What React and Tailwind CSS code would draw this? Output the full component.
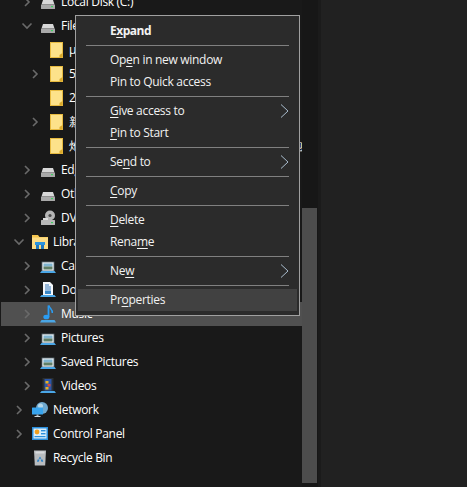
import React from "react";

const Chevron = ({ open }) => (
  <svg width="12" height="12" viewBox="0 0 12 12" className="shrink-0" fill="none" stroke="#6a6a6a" strokeWidth="1.6">
    {open ? <path d="M1.500 3.500l4.500 4.500 4.500-4.500" /> : <path d="M4 2l4 4-4 4" />}
  </svg>
);

const Drive = ({ badge }) => (
  <svg width="16" height="16" viewBox="0 0 16 16">
    <path d="M3 6h10l1.500 4.500h-13z" fill="#d8d8d8" />
    <rect x="1" y="10.500" width="14" height="4.500" rx="0.500" fill="#a9a9a9" />
    <rect x="11" y="12" width="2" height="1.200" fill="#3fd060" />
    {badge && <rect x="0" y="0" width="7" height="6" fill="#2aa4ec" />}
  </svg>
);

const Dvd = () => (
  <svg width="16" height="16" viewBox="0 0 16 16">
    <circle cx="10" cy="5.500" r="5" fill="#b5b5b5" />
    <circle cx="10" cy="5.500" r="1.600" fill="#4a4a4a" />
    <rect x="1" y="10" width="14" height="5" rx="0.500" fill="#b8b8b8" />
    <rect x="3" y="8" width="5" height="2" fill="#dcdcdc" />
    <rect x="11" y="12" width="2" height="1.200" fill="#3fd060" />
  </svg>
);

const Folder = () => (
  <svg width="13" height="16" viewBox="0 0 13 16">
    <rect x="0.500" y="0.500" width="12" height="15" fill="#fde28a" stroke="#e8bb40" />
    <path d="M12.500 11v4.500h-3v-2.500z" fill="#d9a92c" />
  </svg>
);

const LibFolder = () => (
  <svg width="16" height="16" viewBox="0 0 16 16">
    <path d="M0 1h6l1.500 2H16v12H0z" fill="#f4c54e" />
    <rect x="0" y="3.500" width="16" height="11.500" fill="#fbdc86" />
    <path d="M3 8h10v3H3z" fill="#2a93dd" />
    <path d="M4 11h3v4H4zM9 11h3v4H9z" fill="#1e78c0" />
  </svg>
);

const LibBase = ({ children }) => (
  <svg width="16" height="16" viewBox="0 0 16 16">
    {children}
    <path d="M0 15l1.500-2h13L16 15z" fill="#4aa6e6" />
  </svg>
);

const Pic = () => (
  <LibBase>
    <rect x="2" y="4" width="12" height="9" fill="#eef2f5" stroke="#5b6a72" strokeWidth="0.800" />
    <rect x="3.500" y="5.500" width="9" height="3" fill="#7fb4d0" />
    <rect x="3.500" y="8.500" width="9" height="3" fill="#5f7f66" />
  </LibBase>
);

const Doc = () => (
  <LibBase>
    <path d="M3 0h7l3 3v10H3z" fill="#f4f7fa" />
    <path d="M5 3h4M5 5h6M5 7h6" stroke="#3a78b8" strokeWidth="1" />
    <rect x="5" y="8.500" width="6" height="3.500" fill="#3a88c8" />
  </LibBase>
);

const Music = () => (
  <svg width="16" height="18" viewBox="0 0 16 18">
    <path d="M8.500 0.500v11.500" stroke="#2a9cf2" strokeWidth="1.800" />
    <path d="M9 0.500c.4 3 3.800 3.400 3.300 7.500" stroke="#2a9cf2" strokeWidth="1.500" fill="none" />
    <ellipse cx="6.300" cy="12" rx="3" ry="2.300" fill="#2a9cf2" />
    <path d="M0 17.500l1.500-2.500h13l1.500 2.500z" fill="#4aa6e6" />
  </svg>
);

const Video = () => (
  <LibBase>
    <rect x="2.500" y="0" width="11" height="13.500" fill="#2a2f33" />
    <rect x="4.500" y="1" width="7" height="11.500" fill="#2b56a8" />
    <rect x="5.500" y="3" width="3" height="2.500" fill="#e8b020" />
    <rect x="7.500" y="6" width="3" height="2.500" fill="#d8483a" />
    <rect x="5.500" y="9" width="3" height="2.500" fill="#e8b020" />
  </LibBase>
);

const Network = () => (
  <svg width="16" height="16" viewBox="0 0 16 16">
    <circle cx="10" cy="6" r="6" fill="#6fa9cf" />
    <circle cx="8.500" cy="4" r="2.500" fill="#b6d8ea" />
    <rect x="0" y="5.500" width="11" height="7" rx="0.500" fill="#38a4ee" />
    <rect x="4.500" y="12.500" width="2" height="1.500" fill="#9fb3bf" />
    <rect x="2.500" y="14" width="6" height="1" fill="#cfd8dd" />
  </svg>
);

const Control = () => (
  <svg width="16" height="16" viewBox="0 0 16 16">
    <rect x="0" y="1" width="16" height="13" fill="#2b8fdc" />
    <rect x="1.500" y="2.500" width="13" height="10" fill="#d9eefb" />
    <circle cx="5" cy="6" r="2.400" fill="#f0a020" />
    <rect x="9" y="4" width="4.500" height="1.400" fill="#2b8fdc" />
    <rect x="9" y="7" width="4.500" height="1.400" fill="#2b8fdc" />
    <rect x="2.500" y="10" width="11" height="1.200" fill="#2b8fdc" />
  </svg>
);

const Bin = () => (
  <svg width="16" height="16" viewBox="0 0 16 16">
    <path d="M2 0.500h12l-.8 15H2.800z" fill="#b9bcbf" />
    <path d="M3.500 1.500h9v2h-9z" fill="#d8dadc" />
    <path d="M8 6.500l1.400 2.200H6.600zM5.600 9.500h2l-.9 2.200H5zM8.600 9.500h2l.6 2.200H9.400z" fill="#2a82c8" />
  </svg>
);

const L1 = "pl-[13px]";
const L2 = "pl-[21px]";
const L3 = "pl-[29px]";

const rows = [
  { pad: L2, chev: "r", icon: <Drive badge />, text: "Local Disk (C:)" },
  { pad: L2, chev: "d", icon: <Drive />, text: "File" },
  { pad: L3, icon: <Folder />, text: "µTorrent", folder: true },
  { pad: L3, chev: "r", icon: <Folder />, text: "5", folder: true },
  { pad: L3, icon: <Folder />, text: "2", folder: true },
  { pad: L3, chev: "r", icon: <Folder />, text: "新", folder: true },
  { pad: L3, icon: <Folder />, text: "炮炮炮炮炮炮炮炮炮炮炮炮炮炮炮炮炮炮炮炮炮炮炮炮炮炮炮", folder: true },
  { pad: L2, chev: "r", icon: <Drive />, text: "Edge" },
  { pad: L2, chev: "r", icon: <Drive />, text: "Other" },
  { pad: L2, chev: "r", icon: <Dvd />, text: "DVD" },
  { pad: L1, chev: "d", icon: <LibFolder />, text: "Libraries" },
  { pad: L2, chev: "r", icon: <Pic />, text: "Camera Roll" },
  { pad: L2, chev: "r", icon: <Doc />, text: "Documents" },
  { pad: "pl-[20px] ml-px bg-[#505050]", chev: "r", icon: <Music />, text: "Music" },
  { pad: L2, chev: "r", icon: <Pic />, text: "Pictures" },
  { pad: L2, chev: "r", icon: <Pic />, text: "Saved Pictures" },
  { pad: L2, chev: "r", icon: <Video />, text: "Videos" },
  { pad: L1, chev: "r", icon: <Network />, text: "Network" },
  { pad: L1, chev: "r", icon: <Control />, text: "Control Panel" },
  { pad: L1, icon: <Bin />, text: "Recycle Bin" },
];

const TreeRow = ({ r }) => (
  <div className={`flex items-center h-6 whitespace-nowrap ${r.pad}`}>
    <span className="w-3 h-3 shrink-0 flex">{r.chev && <Chevron open={r.chev === "d"} />}</span>
    <span className={`shrink-0 flex items-center justify-start ${r.folder ? "w-[14px] ml-[9px]" : "w-4 ml-[7px]"}`}>{r.icon}</span>
    <span className="text-white ml-[5px]">{r.text}</span>
  </div>
);

const U = ({ children }) => <span className="underline underline-offset-2 decoration-1">{children}</span>;

const Sep = () => <div className="h-px bg-[#808080] mx-[10px] my-[3px]" />;

const Item = ({ children, arrow, active, bold }) => (
  <div className={`h-[22px] mx-[2px] flex items-center pl-[32px] pr-[8px] text-[#f2f2f2] ${active ? "bg-[#414141]" : ""} ${bold ? "font-bold tracking-[-0.5px]" : ""}`}>
    <span className="flex-1">{children}</span>
    {arrow && (
      <svg width="9" height="14" viewBox="0 0 9 14" fill="none" strokeWidth="1">
        <path d="M1 0.500l7 6.500-7 6.500" stroke="#a9bccd" />
      </svg>
    )}
  </div>
);

export default function App() {
  return (
    <div className="relative w-[467px] h-[487px] overflow-hidden flex bg-[#212121] text-[12px] tracking-[-0.3px] font-['Open_Sans',sans-serif]">
      <div className="w-[302px] h-full overflow-hidden bg-[#191919] shrink-0">
        <div className="-mt-[10px]">
          {rows.map((r) => <TreeRow key={r.text} r={r} />)}
        </div>
      </div>
      <div className="w-4 h-full bg-[#171717] shrink-0">
        <div className="mt-[208px] h-[275px] w-[15px] bg-[#4d4d4d]" />
      </div>
      <div className="w-[3px] h-full bg-[#1b1b1b] shrink-0" />

      <div className="absolute left-[75px] top-[15px] w-[225px] border border-[#a0a0a0] bg-[#2b2b2b] py-[4px]">
        <Item bold>E<U>x</U>pand</Item>
        <Sep />
        <Item>Op<U>e</U>n in new window</Item>
        <Item>Pin to Quick access</Item>
        <Sep />
        <Item arrow><U>G</U>ive access to</Item>
        <Item><U>P</U>in to Start</Item>
        <Sep />
        <Item arrow>Se<U>n</U>d to</Item>
        <Sep />
        <Item><U>C</U>opy</Item>
        <Sep />
        <Item><U>D</U>elete</Item>
        <Item>Rena<U>m</U>e</Item>
        <Sep />
        <Item arrow>Ne<U>w</U></Item>
        <Sep />
        <Item active>Pr<U>o</U>perties</Item>
      </div>
    </div>
  );
}
